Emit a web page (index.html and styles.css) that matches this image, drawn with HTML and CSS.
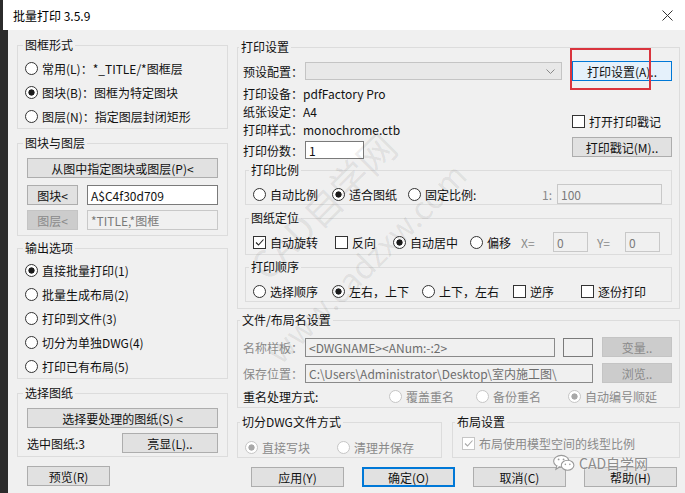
FILE: index.html
```html
<!DOCTYPE html>
<html lang="zh-CN">
<head>
  <meta charset="UTF-8" />
  <meta name="viewport" content="width=device-width, initial-scale=1" />
  <title>批量打印 3.5.9</title>
  <link rel="stylesheet" href="styles.css">
</head>
<body>

<div class="window">
  <div class="titlebar">
    <span class="title">批量打印 3.5.9</span>
    <svg class="close" width="11" height="11" viewBox="0 0 11 11"><path d="M0.5 0.5 L10.5 10.5 M10.5 0.5 L0.5 10.5" stroke="#333" stroke-width="1" fill="none"/></svg>
  </div>

  <div class="main">
    <!-- left column -->
    <div class="col-left">
      <fieldset class="grp g-frame">
        <legend>图框形式</legend>
        <div class="opt row24"><span class="radio"></span>常用(L)：*_TITLE/*图框层</div>
        <div class="opt row24"><span class="radio on"></span>图块(B)：图框为特定图块</div>
        <div class="opt row24"><span class="radio"></span>图层(N)：指定图层封闭矩形</div>
      </fieldset>

      <fieldset class="grp g-block">
        <legend>图块与图层</legend>
        <button class="btn full">从图中指定图块或图层(P)&lt;</button>
        <div class="pick-row">
          <button class="btn pick">图块&lt;</button>
          <span class="field">A$C4f30d709</span>
        </div>
        <div class="pick-row last">
          <button class="btn pick" disabled>图层&lt;</button>
          <span class="field off">*TITLE,*图框</span>
        </div>
      </fieldset>

      <fieldset class="grp g-output">
        <legend>输出选项</legend>
        <div class="opt row24"><span class="radio on"></span>直接批量打印(1)</div>
        <div class="opt row24"><span class="radio"></span>批量生成布局(2)</div>
        <div class="opt row24"><span class="radio"></span>打印到文件(3)</div>
        <div class="opt row24"><span class="radio"></span>切分为单独DWG(4)</div>
        <div class="opt row24"><span class="radio"></span>打印已有布局(5)</div>
      </fieldset>

      <fieldset class="grp g-select">
        <legend>选择图纸</legend>
        <button class="btn full">选择要处理的图纸(S) &lt;</button>
        <div class="sel-row">
          <span>选中图纸:3</span>
          <button class="btn show">亮显(L)..</button>
        </div>
      </fieldset>

      <button class="btn preview">预览(R)</button>
    </div>

    <!-- right column -->
    <div class="col-right">
      <fieldset class="grp g-print">
        <legend>打印设置</legend>
        <div class="ps-top">
          <div class="ps-info">
            <div class="line combo-line">
              <span class="lbl">预设配置：</span>
              <span class="combo"><svg width="9" height="5" viewBox="0 0 9 5"><path d="M0.5 0.5 L4.5 4.5 L8.5 0.5" stroke="#888" fill="none"/></svg></span>
            </div>
            <div class="line">打印设备：pdfFactory Pro</div>
            <div class="line">纸张设定：A4</div>
            <div class="line">打印样式：monochrome.ctb</div>
            <div class="line copies-line">
              <span class="lbl">打印份数：</span>
              <span class="field copies">1</span>
            </div>
          </div>
          <div class="ps-side">
            <div class="hl-wrap">
              <button class="btn hot">打印设置(A)..</button>
              <span class="highlight"></span>
            </div>
            <div class="opt stamp"><span class="check"></span>打开打印戳记</div>
            <button class="btn stamp-btn">打印戳记(M)..</button>
          </div>
        </div>

        <fieldset class="grp sub sub-scale">
          <legend>打印比例</legend>
          <div class="scale-row">
            <div class="opt"><span class="radio"></span>自动比例</div>
            <div class="opt"><span class="radio on"></span>适合图纸</div>
            <div class="opt"><span class="radio"></span>固定比例:</div>
            <span class="dim one">1:</span>
            <span class="field off">100</span>
          </div>
        </fieldset>

        <fieldset class="grp sub sub-pos">
          <legend>图纸定位</legend>
          <div class="pos-row">
            <div class="opt"><span class="check"><svg width="11" height="11" viewBox="0 0 11 11"><path d="M2 5.5 L4.5 8 L9.5 2.5" stroke="#222" stroke-width="1.1" fill="none"/></svg></span>自动旋转</div>
            <div class="opt"><span class="check"></span>反向</div>
            <div class="opt"><span class="radio on"></span>自动居中</div>
            <div class="opt"><span class="radio"></span>偏移</div>
            <span class="dim">X=</span>
            <span class="field off">0</span>
            <span class="dim yl">Y=</span>
            <span class="field off">0</span>
          </div>
        </fieldset>

        <fieldset class="grp sub sub-order">
          <legend>打印顺序</legend>
          <div class="order-row">
            <div class="opt"><span class="radio"></span>选择顺序</div>
            <div class="opt"><span class="radio on"></span>左右，上下</div>
            <div class="opt"><span class="radio"></span>上下，左右</div>
            <div class="opt"><span class="check"></span>逆序</div>
            <div class="opt"><span class="check"></span>逐份打印</div>
          </div>
        </fieldset>
      </fieldset>

      <fieldset class="grp g-name">
        <legend>文件/布局名设置</legend>
        <div class="name-row">
          <span class="lbl dim">名称样板：</span>
          <span class="field off-t name">&lt;DWGNAME&gt;&lt;ANum:-:2&gt;</span>
          <span class="field blank"></span>
          <button class="btn side" disabled>变量..</button>
        </div>
        <div class="name-row path-row">
          <span class="lbl dim">保存位置：</span>
          <span class="field off-t path">C:\Users\Administrator\Desktop\室内施工图\</span>
          <button class="btn side" disabled>浏览..</button>
        </div>
        <div class="dup-row">
          <span>重名处理方式:</span>
          <div class="opt off"><span class="radio"></span>覆盖重名</div>
          <div class="opt off"><span class="radio"></span>备份重名</div>
          <div class="opt off"><span class="radio on"></span>自动编号顺延</div>
        </div>
      </fieldset>

      <div class="bottom-groups">
        <fieldset class="grp g-split">
          <legend>切分DWG文件方式</legend>
          <div class="split-row">
            <div class="opt off"><span class="radio on"></span>直接写块</div>
            <div class="opt off"><span class="radio"></span>清理并保存</div>
          </div>
        </fieldset>
        <fieldset class="grp g-layout">
          <legend>布局设置</legend>
          <div class="opt off layout-opt"><span class="check"><svg width="11" height="11" viewBox="0 0 11 11"><path d="M2 5.5 L4.5 8 L9.5 2.5" stroke="#a8a8a8" stroke-width="1.1" fill="none"/></svg></span>布局使用模型空间的线型比例</div>
        </fieldset>
      </div>

      <div class="actions">
        <button class="btn act">应用(Y)</button>
        <button class="btn act default">确定(O)</button>
        <button class="btn act">取消(C)</button>
        <button class="btn act">帮助(H)</button>
      </div>
    </div>
  </div>

  <!-- watermarks over the dialog -->
  <span class="wm wm-a">CAD自学网</span>
  <span class="wm wm-b">www.cadzxw.com</span>
  <div class="wx-mark">
    <svg width="24" height="18" viewBox="0 0 26 20">
      <ellipse cx="10" cy="8" rx="8.5" ry="6.5" fill="#fff" stroke="#999" stroke-width="1.2"/>
      <path d="M5 13 L4 17 L8.5 14.2" fill="#fff" stroke="#999" stroke-width="1.2"/>
      <ellipse cx="17" cy="12.5" rx="7" ry="5.5" fill="#fff" stroke="#999" stroke-width="1.2"/>
      <circle cx="7" cy="6" r="1" fill="#999"/>
      <circle cx="12.5" cy="6" r="1" fill="#999"/>
      <circle cx="14.5" cy="11.5" r="0.9" fill="#999"/>
      <circle cx="19.5" cy="11.5" r="0.9" fill="#999"/>
    </svg>
    <span>CAD自学网</span>
  </div>
</div>

</body>
</html>
```

FILE: styles.css
```css
/* batch print dialog */
* {
  box-sizing: border-box;
}
body {
  margin: 0;
  background: #f0f0f0;
  font-family: "Noto Sans CJK SC", sans-serif;
  font-size: 12px;
  color: #111;
}
.window {
  position: relative;
  width: 685px;
  height: 493px;
  overflow: hidden;
  background: #f0f0f0;
}

/* title bar */
.titlebar {
  height: 30px;
  display: flex;
  align-items: center;
  justify-content: space-between;
  padding: 0 12px 0 10px;
  background: #fff;
  border-left: 3px solid #2b2b2b;
}
.title {
  color: #000;
}
.close {
  display: block;
}

.main {
  display: flex;
  align-items: flex-start;
  gap: 9px;
  height: 463px;
  padding: 7px 5px 0 9px;
  border-left: 8px solid #2b2b2b;
}
.col-left {
  width: 211px;
  flex: none;
}
.col-right {
  width: 443px;
  flex: none;
  padding-top: 2px;
}

/* group boxes */
fieldset.grp {
  margin: 0;
  padding: 0 9px 0 5px;
  border: 1px solid #dcdcdc;
  min-width: 0;
}
legend {
  padding: 0 2px;
  line-height: 16px;
}

/* controls */
.btn {
  font: inherit;
  color: #111;
  height: 20px;
  padding: 0;
  background: #e1e1e1;
  border: 1px solid #adadad;
  border-radius: 0;
}
.btn:disabled {
  background: #cccccc;
  border-color: #c4c4c4;
  color: #8a8a8a;
}
.field {
  display: flex;
  align-items: center;
  height: 20px;
  padding: 0 3px;
  background: #fff;
  border: 1px solid #7a7a7a;
  white-space: nowrap;
  overflow: hidden;
}
.field.off {
  background: #f0f0f0;
  border-color: #c8c8c8;
  color: #7a7a7a;
}
.field.off-t {
  background: #f0f0f0;
  color: #6d6d6d;
  border-color: #8a8a8a;
}
.opt {
  display: flex;
  align-items: center;
  gap: 4px;
  white-space: nowrap;
}
.opt.off {
  color: #8a8a8a;
}
.radio {
  flex: none;
  width: 13px;
  height: 13px;
  border: 1px solid #333;
  border-radius: 50%;
  background: #fff;
}
.radio.on {
  background: radial-gradient(circle, #1a1a1a 0 2.8px, #fff 3.4px);
}
.off .radio {
  border-color: #c6c6c6;
}
.off .radio.on {
  background: radial-gradient(circle, #a8a8a8 0 2.8px, #fff 3.4px);
}
.check {
  flex: none;
  display: flex;
  width: 13px;
  height: 13px;
  border: 1px solid #333;
  background: #fff;
}
.check svg {
  display: block;
}
.off .check {
  border-color: #c6c6c6;
}
.dim {
  color: #8a8a8a;
}

/* left column */
.row24 {
  height: 24px;
  padding-left: 2px;
}
.g-frame {
  padding-top: 3px !important;
}
.g-block {
  margin-top: 6px !important;
  padding: 7px 9px 5px 9px !important;
}
.g-block legend,
.g-select legend {
  margin-left: -4px;
}
.full {
  display: block;
  width: 100%;
}
.pick-row {
  display: flex;
  gap: 9px;
  margin-top: 7px;
}
.pick-row.last {
  margin-top: 5px;
}
.pick {
  width: 51px;
  flex: none;
}
.pick-row .field {
  flex: 1;
}
.g-output {
  margin-top: 4px !important;
  padding-top: 2px !important;
}
.g-select {
  margin-top: 6px !important;
  padding: 7px 9px 3px 9px !important;
}
.sel-row {
  display: flex;
  align-items: center;
  justify-content: space-between;
  margin-top: 5px;
}
.show {
  width: 96px;
}
.preview {
  display: block;
  width: 83px;
  margin: 9px 0 0 10px;
}

/* print settings */
.g-print {
  padding: 6px 7px 6px 5px !important;
}
.g-print > legend {
  margin-left: -4px;
}
.ps-top {
  display: flex;
  gap: 10px;
}
.ps-info {
  flex: 1;
}
.ps-side {
  width: 100px;
  flex: none;
}
.line {
  display: flex;
  align-items: center;
  height: 18px;
  white-space: nowrap;
}
.combo-line {
  height: 20px;
  margin-bottom: 3px;
}
.copies-line {
  height: 20px;
  margin-top: 2px;
}
.lbl {
  width: 62px;
  flex: none;
}
.combo {
  flex: 1;
  height: 18px;
  display: flex;
  align-items: center;
  justify-content: flex-end;
  padding-right: 6px;
  background: #e8e8e8;
  border: 1px solid #c4c4c4;
}
.field.copies {
  width: 59px;
  height: 18px;
}
.hl-wrap {
  position: relative;
  height: 20px;
}
.btn.hot {
  width: 100%;
  background: #e5f1fb;
  border-color: #0078d7;
}
.highlight {
  position: absolute;
  left: -2px;
  top: -13px;
  width: 81px;
  height: 42px;
  border: 2px solid #d9343d;
}
.stamp {
  height: 18px;
  margin-top: 31px;
}
.stamp-btn {
  display: block;
  width: 100%;
  margin-top: 7px;
}

.sub {
  margin-left: 2px !important;
  padding: 6px 9px 0 7px !important;
}
.sub legend {
  margin-left: -4px;
}
.sub-scale {
  margin-top: 2px !important;
}
.sub-pos {
  margin-top: 5px !important;
  padding-bottom: 2px !important;
}
.sub-order {
  margin-top: 4px !important;
}
.scale-row,
.pos-row,
.order-row {
  display: grid;
  align-items: center;
  height: 20px;
}
.scale-row {
  grid-template-columns: 79px 76px 1fr auto 105px;
}
.one {
  margin-right: 5px;
}
.pos-row {
  grid-template-columns: 82px 58px 77px 51px 32px 35px 37px 35px;
}
.yl {
  padding-left: 9px;
}
.order-row {
  grid-template-columns: 79px 90px 91px 68px auto;
}

/* file / layout name */
.g-name {
  margin-top: 3px !important;
  padding: 9px 7px 2px 5px !important;
}
.g-name legend {
  margin-left: -3px;
}
.name-row {
  display: flex;
  align-items: center;
  height: 20px;
}
.name-row .field {
  height: 19px;
}
.name {
  width: 250px;
}
.blank {
  width: 30px;
  margin-left: 8px;
  background: #f0f0f0 !important;
}
.path {
  width: 288px;
}
.side {
  width: 70px;
  margin-left: 9px;
}
.path-row {
  margin-top: 6px;
}
.dup-row {
  display: grid;
  grid-template-columns: 146px 87px 92px auto;
  align-items: center;
  height: 18px;
  margin-top: 4px;
}

.bottom-groups {
  display: flex;
  gap: 10px;
  margin-top: 6px;
}
.g-split {
  width: 205px;
  flex: none;
  padding: 8px 7px 1px 5px !important;
}
.g-layout {
  flex: 1;
  padding: 4px 7px 5px 5px !important;
}
.g-split legend,
.g-layout legend {
  margin-left: -3px;
}
.split-row {
  display: grid;
  grid-template-columns: 92px auto;
  height: 18px;
  padding-left: 2px;
  align-items: center;
}
.layout-opt {
  height: 18px;
  padding-left: 4px;
}

.actions {
  display: flex;
  justify-content: flex-end;
  gap: 18px;
  margin-top: 9px;
  padding-right: 3px;
}
.act {
  width: 93px;
}
.act.default {
  border-color: #0078d7;
  box-shadow: inset 0 0 0 1px #0078d7;
}

/* watermarks */
.wm {
  position: absolute;
  white-space: nowrap;
  color: rgba(0, 0, 0, 0.08);
  transform: translate(-50%, -50%) rotate(-45deg);
  pointer-events: none;
}
.wm-a {
  left: 322px;
  top: 205px;
  font-size: 38px;
}
.wm-b {
  left: 365px;
  top: 262px;
  font-size: 32px;
}
.wx-mark {
  position: absolute;
  left: 552px;
  top: 454px;
  display: flex;
  align-items: center;
  gap: 3px;
  font-size: 14px;
  line-height: 14px;
  color: #8c8c8c;
  text-shadow: 0 0 2px #fff;
}
.wx-mark svg {
  display: block;
}
```
